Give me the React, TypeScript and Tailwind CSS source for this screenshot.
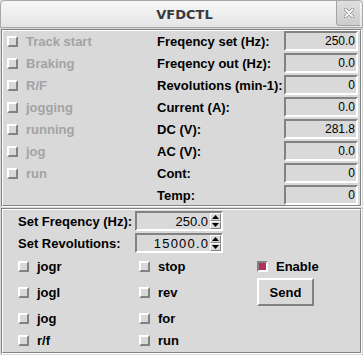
import React from "react";

function Box({ checked }: { checked?: boolean }) {
  return checked ? (
    <span className="block w-[11px] h-[11px] shrink-0 border-2 border-t-[#828282] border-l-[#828282] border-b-white border-r-white bg-[#b03060]" />
  ) : (
    <span className="block w-[11px] h-[11px] shrink-0 border-2 border-t-white border-l-white border-b-[#828282] border-r-[#828282]" />
  );
}

function Groove({ children, className }: { children: React.ReactNode; className?: string }) {
  return (
    <div className={"border border-t-[#828282] border-l-[#828282] border-b-white border-r-white " + (className || "")}>
      <div className="h-full border border-t-white border-l-white border-b-[#828282] border-r-[#828282]">{children}</div>
    </div>
  );
}

function Entry({ v }: { v: string }) {
  return (
    <div className="w-[74px] h-[20px] border-2 border-t-[#828282] border-l-[#828282] border-b-white border-r-white flex items-center justify-end pr-[1px] text-[12px] font-normal text-black">
      {v}
    </div>
  );
}

function Spin({ v, wide }: { v: string; wide?: boolean }) {
  return (
    <div className="w-[88px] h-[20px] border-2 border-t-[#828282] border-l-[#828282] border-b-white border-r-white flex">
      <div className="flex-1 flex items-center justify-end pr-[2px] text-[13px] font-normal text-black">
        <span className={wide ? "tracking-[1.2px] mr-[-1.2px]" : ""}>{v}</span>
      </div>
      <div className="w-[11px] flex flex-col">
        <div className="h-[8px] border border-t-white border-l-white border-b-[#828282] border-r-[#828282] flex items-center justify-center">
          <svg width="7" height="4" viewBox="0 0 7 4"><polygon points="3.5,0 7,4 0,4" fill="black" /></svg>
        </div>
        <div className="h-[8px] border border-t-white border-l-white border-b-[#828282] border-r-[#828282] flex items-center justify-center">
          <svg width="7" height="4" viewBox="0 0 7 4"><polygon points="0,0 7,0 3.5,4" fill="black" /></svg>
        </div>
      </div>
    </div>
  );
}

function Check({ label, disabled, checked }: { label: string; disabled?: boolean; checked?: boolean }) {
  return (
    <div className="flex items-center gap-[8px]">
      <Box checked={checked} />
      <span className={disabled ? "text-[#a3a3a3]" : "text-black"}>{label}</span>
    </div>
  );
}

export default function App() {
  const leftItems = ["Track start", "Braking", "R/F", "jogging", "running", "jog", "run"];
  const right: [string, string][] = [
    ["Freqency set (Hz):", "250.0"],
    ["Freqency out (Hz):", "0.0"],
    ["Revolutions (min-1):", "0"],
    ["Current (A):", "0.0"],
    ["DC (V):", "281.8"],
    ["AC (V):", "0.0"],
    ["Cont:", "0"],
    ["Temp:", "0"],
  ];
  return (
    <div className="w-[363px] h-[355px] bg-[#d9d9d9] overflow-hidden font-['Liberation_Sans',Arial,sans-serif] font-bold text-[13px] leading-none">
      {/* title bar */}
      <div className="relative h-[28px] border border-[#a8a8a8] rounded-t-[5px] bg-linear-to-b from-[#f8f8f8] to-[#e4e4e4] flex items-center justify-center">
        <span className="font-['DejaVu_Sans',sans-serif] font-bold text-[13px] text-[#3a3a3a] pl-[6px]">VFDCTL</span>
        <div className="absolute right-[2px] top-0 w-[24px] h-[25px] border-l border-b border-[#a4a4a4] rounded-bl-[4px] bg-linear-to-b from-[#dedede] to-[#cdcdcd] flex items-center justify-center">
          <svg width="10" height="10" viewBox="0 0 10 10">
            <path d="M1.5 1.5 L8.5 8.5 M8.5 1.5 L1.5 8.5" stroke="#8a8a8a" strokeWidth="3.2" strokeLinecap="round" />
            <path d="M1.5 1.5 L8.5 8.5 M8.5 1.5 L1.5 8.5" stroke="#f6f6f6" strokeWidth="2" strokeLinecap="round" />
          </svg>
        </div>
      </div>

      {/* top frame */}
      <Groove className="mx-px mt-px h-[178px]">
        <div className="flex h-full">
          <div className="w-[154px] flex flex-col gap-[2px]">
            {leftItems.map((t) => (
              <div key={t} className="h-[20px] flex items-center pl-[4px]">
                <Check label={t} disabled />
              </div>
            ))}
          </div>
          <div className="flex-1 flex flex-col gap-[2px] pr-[2px]">
            {right.map(([l, v]) => (
              <div key={l} className="h-[20px] flex items-center justify-between">
                <span className="text-black">{l}</span>
                <Entry v={v} />
              </div>
            ))}
          </div>
        </div>
      </Groove>

      {/* bottom frame */}
      <Groove className="mx-px mt-px h-[146px]">
        <div className="flex flex-col pt-[1px]">
          <div className="h-[20px] flex items-center">
            <span className="w-[132px] pl-[15px]">Set Freqency (Hz):</span>
            <Spin v="250.0" />
          </div>
          <div className="h-[20px] mt-[2px] flex items-center">
            <span className="w-[132px] pl-[15px]">Set Revolutions:</span>
            <Spin v="15000.0" wide />
          </div>
          <div className="grid grid-cols-[121px_118px_1fr] pl-[15px] mt-[2px] grid-rows-[22px_30px_22px_22px]">
            <div className="flex items-center"><Check label="jogr" /></div>
            <div className="flex items-center"><Check label="stop" /></div>
            <div className="flex items-center"><Check label="Enable" checked /></div>
            <div className="flex items-center"><Check label="jogl" /></div>
            <div className="flex items-center"><Check label="rev" /></div>
            <div className="flex items-center">
              <div className="w-[57px] h-[28px] border-2 border-t-white border-l-white border-b-[#828282] border-r-[#828282] flex items-center justify-center">Send</div>
            </div>
            <div className="flex items-center"><Check label="jog" /></div>
            <div className="flex items-center"><Check label="for" /></div>
            <div />
            <div className="flex items-center"><Check label="r/f" /></div>
            <div className="flex items-center"><Check label="run" /></div>
            <div />
          </div>
        </div>
      </Groove>
    </div>
  );
}
